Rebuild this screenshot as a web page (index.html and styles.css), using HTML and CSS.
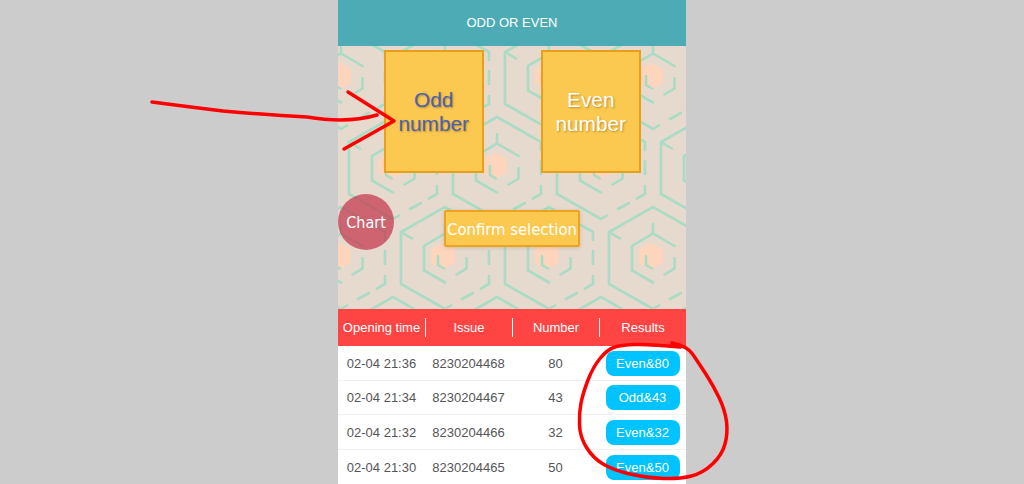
FILE: index.html
```html
<!DOCTYPE html>
<html lang="en">
<head>
<meta charset="utf-8">
<title>Odd or Even</title>
<link rel="stylesheet" href="styles.css">
</head>
<body>
<main class="app">
  <header class="topbar">ODD OR EVEN</header>
  <section class="stage">
    <div class="picks">
      <button class="pick pick-active">Odd<br>number</button>
      <button class="pick">Even<br>number</button>
    </div>
    <button class="confirm">Confirm selection</button>
    <div class="chart">Chart</div>
  </section>
  <section class="history">
    <div class="row head">
      <div class="cell">Opening time</div>
      <div class="cell">Issue</div>
      <div class="cell">Number</div>
      <div class="cell">Results</div>
    </div>
    <div class="row">
      <div class="cell">02-04 21:36</div>
      <div class="cell">8230204468</div>
      <div class="cell">80</div>
      <div class="cell"><span class="pill">Even&amp;80</span></div>
    </div>
    <div class="row">
      <div class="cell">02-04 21:34</div>
      <div class="cell">8230204467</div>
      <div class="cell">43</div>
      <div class="cell"><span class="pill">Odd&amp;43</span></div>
    </div>
    <div class="row">
      <div class="cell">02-04 21:32</div>
      <div class="cell">8230204466</div>
      <div class="cell">32</div>
      <div class="cell"><span class="pill">Even&amp;32</span></div>
    </div>
    <div class="row">
      <div class="cell">02-04 21:30</div>
      <div class="cell">8230204465</div>
      <div class="cell">50</div>
      <div class="cell"><span class="pill">Even&amp;50</span></div>
    </div>
  </section>
</main>
<svg class="marks" width="1024" height="484" viewBox="0 0 1024 484" aria-hidden="true">
  <path d="M152,102 Q190,107 223,111 Q270,115 307,117 Q325,120 340,120 Q360,120 377,115"/>
  <path d="M348,92 L394,121 L344,149"/>
  <path d="M672,343 Q687,346 692.5,354 Q698,362 705.5,373.5 Q713,385 719,397.5 Q725,410 726.5,421.5 Q728,433 725,444 Q722,455 712.5,464 Q703,473 691.5,476 Q680,479 663.5,478.5 Q647,478 630,474 Q613,470 603,464 Q593,458 586.5,447.5 Q580,437 579.5,425 Q579,413 581,403 Q583,393 588,380 Q593,367 600,358.5 Q607,350 613.5,347.5 Q620,345 635,344.5 Q650,344 680,347"/>
</svg>
</body>
</html>
```

FILE: styles.css
```css
* {
  box-sizing: border-box;
}

html,
body {
  margin: 0;
  height: 100%;
  overflow: hidden;
}

body {
  position: relative;
  background: #cccccc;
  font-family: "Liberation Sans", Arial, sans-serif;
}

.app {
  width: 348px;
  height: 484px;
  margin: 0 auto;
  background: #ffffff;
  overflow: hidden;
}

.topbar {
  height: 46px;
  display: flex;
  align-items: center;
  justify-content: center;
  padding-bottom: 2px;
  background: #4cabb5;
  color: #ffffff;
  font-size: 13px;
}

.stage {
  position: relative;
  height: 263px;
  padding-top: 4px;
  background-color: #e6d9cd;
  background-position: 55px 167px;
  background-size: 104px 180px;
  background-image: url("data:image/svg+xml,%3Csvg xmlns='http://www.w3.org/2000/svg' xmlns:xlink='http://www.w3.org/1999/xlink' width='104' height='180' viewBox='0 0 104 180'%3E%3Cdefs%3E%3Cg id='h' fill='none' stroke='%23a9dcc5' stroke-width='2.6' stroke-linecap='round' stroke-linejoin='miter'%3E%3Cpolygon fill='%23fdd5bd' stroke='none' points='-2,-15.5 10,-9 10,5 -2,11.5 -14,5 -14,-9'/%3E%3Cpath d='M-7,-2V7L-1,10.500'/%3E%3Cpath d='M21.500,-12L0,-24.500L-21,-12V12.500L0,24.500M0,-24.500V-34M21.500,0V10.500L11.500,16.500'/%3E%3Cpath d='M44,-26L0,-51L-44,-26V26L0,51L6,47.500M-44,-26L-33,-19.500M44,-26V-18M44,-7V6M44,18V26L36,30.500M28,35L17,41'/%3E%3C/g%3E%3C/defs%3E%3Cuse xlink:href='%23h' x='52' y='45'/%3E%3Cuse xlink:href='%23h' x='52' y='225'/%3E%3Cuse xlink:href='%23h' x='0' y='135'/%3E%3Cuse xlink:href='%23h' x='104' y='135'/%3E%3Cuse xlink:href='%23h' x='0' y='-45'/%3E%3Cuse xlink:href='%23h' x='104' y='-45'/%3E%3C/svg%3E");
}

.picks {
  display: flex;
  gap: 57.5px;
  padding-left: 46px;
}

.pick {
  width: 99.5px;
  height: 123px;
  padding: 0;
  border: 2px solid #ea9f1a;
  background: #fbc950;
  color: #ffffff;
  font-family: inherit;
  font-size: 20.8px;
  line-height: 24px;
  text-shadow: 1px 1px 2px #bb8a2e;
}

.pick-active {
  color: #4a62b4;
}

.confirm {
  display: block;
  width: 136px;
  height: 37px;
  margin: 37px auto 0;
  padding: 2px 0 0;
  border: 2px solid #eda41c;
  border-radius: 2px;
  background: #fbc950;
  color: #ffffff;
  font-family: "DejaVu Sans Condensed", "DejaVu Sans", sans-serif;
  font-stretch: condensed;
  font-size: 16.5px;
  white-space: nowrap;
  box-shadow: 0 1px 4px rgba(0, 0, 0, 0.12);
}

.chart {
  position: absolute;
  left: 0;
  top: 148px;
  width: 56px;
  height: 56px;
  display: flex;
  align-items: center;
  justify-content: center;
  border-radius: 50%;
  background: rgba(196, 44, 70, 0.68);
  color: #ffffff;
  font-family: "DejaVu Sans Condensed", "DejaVu Sans", sans-serif;
  font-stretch: condensed;
  font-size: 16px;
}

.row {
  display: grid;
  grid-template-columns: repeat(4, 87px);
  height: 34.67px;
  padding-top: 1px;
  align-items: center;
  border-bottom: 1px solid #f1f1f1;
  color: #555555;
  font-size: 13px;
  text-align: center;
}

.head {
  grid-template-columns: 88px 87px 87px 86px;
  height: 37px;
  padding-top: 0;
  border-bottom: 0;
  background: #ff4444;
  color: #ffffff;
}

.head .cell {
  line-height: 19px;
  border-right: 1px solid #ffffff;
}

.head .cell:last-child {
  border-right: 0;
}

.pill {
  display: block;
  width: 74px;
  height: 25px;
  margin: 0 auto;
  border-radius: 8px;
  background: #00c3ff;
  color: #ffffff;
  line-height: 25px;
}

.marks {
  position: absolute;
  left: 0;
  top: 0;
  fill: none;
  stroke: #ff0000;
  stroke-width: 3.5;
  stroke-linecap: round;
  stroke-linejoin: round;
  pointer-events: none;
}
```
